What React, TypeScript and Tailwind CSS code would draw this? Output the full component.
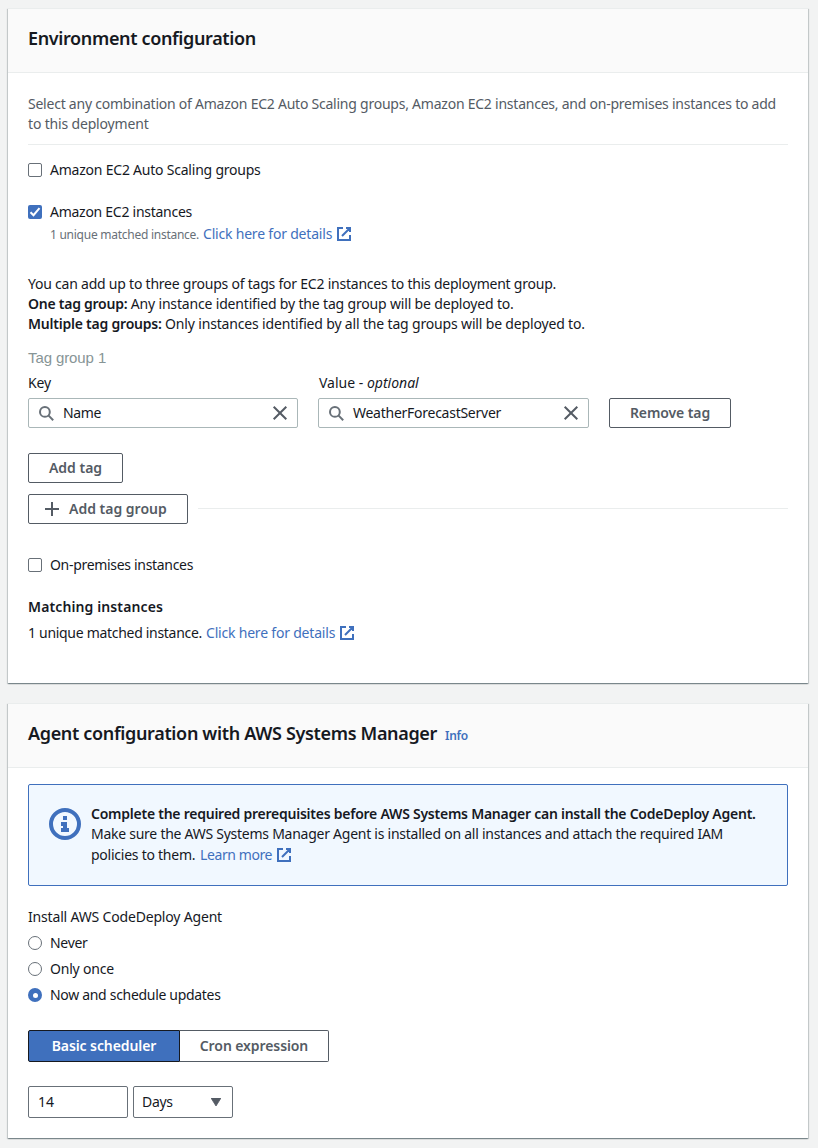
import type { ReactNode } from "react";

function ExternalIcon({ className = "" }: { className?: string }) {
  return (
    <svg className={`h-4 w-4 shrink-0 ${className}`} viewBox="0 0 16 16" fill="none" stroke="#3f70bd" strokeWidth="2">
      <path d="M10 2h4v4M6 10l8-8M14 9.05V14H2V2h5" />
    </svg>
  );
}

function SearchIcon() {
  return (
    <svg className="h-4 w-4 shrink-0" viewBox="0 0 16 16" fill="none" stroke="#687078" strokeWidth="2">
      <circle cx="6.9" cy="6.9" r="4.9" />
      <path d="M10.4 10.4l4.8 4.8" />
    </svg>
  );
}

function CloseIcon() {
  return (
    <svg className="h-4 w-4 shrink-0" viewBox="0 0 16 16" fill="none" stroke="#545b64" strokeWidth="2">
      <path d="M1.7 1.7l12.6 12.6M14.3 1.7L1.7 14.3" />
    </svg>
  );
}

function Card({ title, children }: { title: ReactNode; children: ReactNode }) {
  return (
    <section className="border-t border-[#eaeded] bg-white shadow-[0_1px_1px_0_rgba(0,28,36,0.3),1px_1px_1px_0_rgba(0,28,36,0.15),-1px_1px_1px_0_rgba(0,28,36,0.15)]">
      <header className="flex h-16 items-start border-b border-[#eaeded] bg-[#fafafa] px-5 pt-[18px]">{title}</header>
      <div className="px-5">{children}</div>
    </section>
  );
}

function Checkbox({ checked, label, className }: { checked?: boolean; label: string; className: string }) {
  return (
    <label className="flex h-5 items-center">
      {checked ? (
        <span className="flex h-3.5 w-3.5 items-center justify-center rounded-xs bg-[#3f70bd]">
          <svg className="h-3.5 w-3.5" viewBox="0 0 14 14" fill="none" stroke="#fff" strokeWidth="2">
            <path d="M2.5 7.2l3 3 6-7" />
          </svg>
        </span>
      ) : (
        <span className="h-3.5 w-3.5 rounded-xs border border-[#687078] bg-white" />
      )}
      <span className={`ml-2 ${className}`}>{label}</span>
    </label>
  );
}

function Radio({ checked, label, className }: { checked?: boolean; label: string; className: string }) {
  return (
    <label className="flex h-5 items-center">
      {checked ? (
        <span className="flex h-3.5 w-3.5 items-center justify-center rounded-full bg-[#3f70bd]">
          <span className="h-[5px] w-[5px] rounded-full bg-white" />
        </span>
      ) : (
        <span className="h-3.5 w-3.5 rounded-full border border-[#687078] bg-white" />
      )}
      <span className={`ml-2 ${className}`}>{label}</span>
    </label>
  );
}

function SearchField({ value, className, textClass }: { value: string; className: string; textClass: string }) {
  return (
    <div className={`flex h-[30px] items-center rounded-xs border border-[#aab7b8] px-[9px] ${className}`}>
      <SearchIcon />
      <span className={`ml-[9px] flex-1 ${textClass}`}>{value}</span>
      <CloseIcon />
    </div>
  );
}

function Button({ children, className }: { children: ReactNode; className: string }) {
  return (
    <button
      className={`flex h-[30px] items-center rounded-xs border border-[#545b64] bg-white font-semibold text-[#545b64] ${className}`}
    >
      {children}
    </button>
  );
}

export default function App() {
  return (
    <div className="h-[1148px] bg-[#f2f3f3] px-2 pt-2 font-['Noto_Sans',sans-serif] text-sm leading-5 text-[#16191f]">
      <div className="mr-0.5 flex flex-col gap-5">
        <Card
          title={
            <h2 className="text-lg leading-[22px] font-semibold tracking-[-0.36px]">Environment configuration</h2>
          }
        >
          <div className="h-[610px] pt-[21px]">
            <p className="border-b border-[#eaeded] pb-2.5 tracking-[-0.235px] text-[#545b64]">
              Select any combination of Amazon EC2 Auto Scaling groups, Amazon EC2 instances, and on-premises instances to
              add
              <br />
              <span className="tracking-[-0.17px]">to this deployment</span>
            </p>
            <div className="pt-[15px]">
              <Checkbox label="Amazon EC2 Auto Scaling groups" className="tracking-[-0.22px]" />
            </div>
            <div className="pt-[22px]">
              <Checkbox checked label="Amazon EC2 instances" className="tracking-[-0.27px]" />
            </div>
            <div className="mt-0.5 ml-[22px] flex h-5 items-center">
              <span className="w-[153px] pt-0.5 text-xs leading-5 tracking-[-0.26px] text-[#687078]">
                1 unique matched instance.
              </span>
              <a className="tracking-[-0.2px] text-[#3f70bd]">Click here for details</a>
              <ExternalIcon className="ml-1" />
            </div>

            <div className="mt-[30px] tracking-[-0.225px]">
              <p>You can add up to three groups of tags for EC2 instances to this deployment group.</p>
              <p>
                <b className="font-semibold tracking-[-0.25px]">One tag group:</b>{" "}
                <span className="tracking-[-0.17px]">Any instance identified by the tag group will be deployed to.</span>
              </p>
              <p>
                <b className="font-semibold tracking-[-0.22px]">Multiple tag groups:</b>{" "}
                <span className="tracking-[-0.165px]">
                  Only instances identified by all the tag groups will be deployed to.
                </span>
              </p>
            </div>

            <h3 className="mt-3.5 h-5 font-['Liberation_Sans',sans-serif] text-[15px] tracking-[-0.1px] text-[#879596]">
              Tag group 1
            </h3>
            <div className="mt-[5px] flex items-end gap-5">
              <div>
                <div className="mb-[5px] tracking-[-0.2px]">Key</div>
                <SearchField value="Name" className="w-[270px]" textClass="tracking-[-0.4px]" />
              </div>
              <div>
                <div className="mb-[5px] pl-px">
                  Value - <i>optional</i>
                </div>
                <SearchField value="WeatherForecastServer" className="w-[271px]" textClass="tracking-[-0.26px]" />
              </div>
              <Button className="w-[122px] justify-center tracking-[-0.1px]">Remove tag</Button>
            </div>
            <Button className="mt-[25px] w-[95px] justify-center">Add tag</Button>
            <div className="mt-[11px] flex items-center gap-2.5">
              <Button className="w-40 pl-[15px]">
                <svg className="h-4 w-4" viewBox="0 0 16 16" fill="none" stroke="#545b64" strokeWidth="2">
                  <path d="M8 1v14M1 8h14" />
                </svg>
                <span className="ml-[9px]">Add tag group</span>
              </Button>
              <div className="mb-px h-px flex-1 bg-[#eaeded]" />
            </div>
            <div className="pt-[31px]">
              <Checkbox label="On-premises instances" className="tracking-[-0.31px]" />
            </div>
            <h3 className="mt-[22px] font-semibold tracking-[0.12px]">Matching instances</h3>
            <div className="mt-1.5 flex h-5 items-center">
              <span className="w-[178px] tracking-[-0.3px]">1 unique matched instance.</span>
              <a className="tracking-[-0.2px] text-[#3f70bd]">Click here for details</a>
              <ExternalIcon className="ml-1" />
            </div>
          </div>
        </Card>

        <Card
          title={
            <div className="flex items-baseline">
              <h2 className="text-lg leading-[22px] font-semibold tracking-[-0.34px]">
                Agent configuration with AWS Systems Manager
              </h2>
              <a className="ml-2 text-xs font-semibold tracking-[-0.25px] text-[#3f70bd]">Info</a>
            </div>
          }
        >
          <div className="h-[370px] pt-4">
            <div className="flex h-[102px] rounded-xs border border-[#3f70bd] bg-[#f1f8ff] pt-[19px] pl-5">
              <svg className="mt-1 h-8 w-8 shrink-0" viewBox="0 0 32 32">
                <circle cx="16" cy="16" r="14" fill="none" stroke="#3f70bd" strokeWidth="4" />
                <path d="M14 8h4v4h-4zM12 14h6v6h2v4h-8v-4h2v-2h-2z" fill="#3f70bd" />
              </svg>
              <div className="ml-2.5">
                <p className="font-semibold tracking-[-0.246px]">
                  Complete the required prerequisites before AWS Systems Manager can install the CodeDeploy Agent.
                </p>
                <p className="tracking-[-0.257px]">
                  Make sure the AWS Systems Manager Agent is installed on all instances and attach the required IAM
                </p>
                <div className="mt-px flex h-5 items-center">
                  <span className="w-[109px] tracking-[-0.25px]">policies to them.</span>
                  <a className="tracking-[-0.4px] text-[#3f70bd]">Learn more</a>
                  <ExternalIcon className="ml-1" />
                </div>
              </div>
            </div>

            <div className="mt-[21px] tracking-[-0.175px]">Install AWS CodeDeploy Agent</div>
            <div className="mt-1.5 flex flex-col gap-1.5">
              <Radio label="Never" className="tracking-[-0.3px]" />
              <Radio label="Only once" className="tracking-[-0.2px]" />
              <Radio checked label="Now and schedule updates" className="tracking-[-0.31px]" />
            </div>

            <div className="mt-[25px] flex h-8 font-semibold tracking-[-0.09px]">
              <button className="w-[152px] rounded-l-xs border border-[#16191f] bg-[#3f70bd] text-white">
                Basic scheduler
              </button>
              <button className="w-[149px] rounded-r-xs border border-l-0 border-[#545b64] bg-white text-[#545b64]">
                Cron expression
              </button>
            </div>

            <div className="mt-6 flex gap-[5px]">
              <div className="flex h-8 w-[100px] items-center rounded-xs border border-[#687078] pl-[9px]">14</div>
              <div className="flex h-8 w-[100px] items-center justify-between rounded-xs border border-[#687078] pr-[11px] pl-2 tracking-[-0.3px]">
                Days
                <svg className="h-2 w-2.5" viewBox="0 0 10 8">
                  <path d="M0 0h10L5 8z" fill="#545b64" stroke="#545b64" strokeLinejoin="round" strokeWidth="0.8" />
                </svg>
              </div>
            </div>
          </div>
        </Card>
      </div>
    </div>
  );
}
